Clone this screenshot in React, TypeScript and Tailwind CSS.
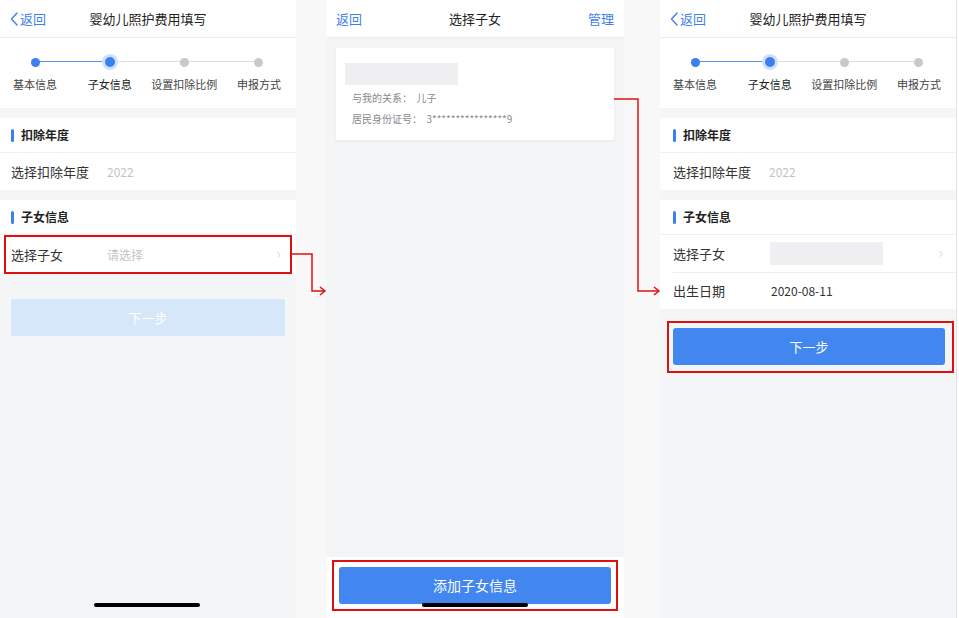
import { ChevronRight } from 'lucide-react';

const font = { fontFamily: '"Noto Sans CJK SC", "Noto Sans", sans-serif' };

const steps = ['基本信息', '子女信息', '设置扣除比例', '申报方式'];

const BackChevron = () => (
  <svg width="8" height="14" viewBox="0 0 8 14" className="mr-[2px]">
    <path d="M7 1 L1.5 7 L7 13" fill="none" stroke="currentColor" strokeWidth="1.4" strokeLinecap="round" strokeLinejoin="round" />
  </svg>
);

const Header = ({ title, back = true, right }: { title: string; back?: boolean; right?: string }) => (
  <div className="h-[38px] bg-white border-b border-[#ececee] flex items-center relative px-[10px]">
    <div className="flex items-center text-[13px] text-[#3f7fe9] z-10">
      {back && <BackChevron />}
      <span>返回</span>
    </div>
    <div className="absolute inset-0 flex items-center justify-center text-[13px] text-[#222]">{title}</div>
    {right && <div className="ml-auto text-[13px] text-[#3f7fe9] z-10">{right}</div>}
  </div>
);

const Steps = () => (
  <div className="bg-white h-[70px] pt-[18px] relative">
    <div className="absolute top-[23px] left-[35px] w-[75px] h-px bg-[#5a8fe8]" />
    <div className="absolute top-[23px] left-[110px] w-[148px] h-px bg-[#dedee0]" />
    <div className="flex justify-between w-[294px] relative">
      {steps.map((s, i) => (
        <div key={s} className="w-[70px] flex flex-col items-center">
          <div className="h-[12px] flex items-center justify-center">
            {i === 1 ? (
              <div className="w-[16px] h-[16px] rounded-full bg-[#cfe1fb] flex items-center justify-center">
                <div className="w-[10px] h-[10px] rounded-full bg-[#3b7ff0]" />
              </div>
            ) : (
              <div className={`w-[9px] h-[9px] rounded-full ${i === 0 ? 'bg-[#3b7ff0]' : 'bg-[#c9c9cc]'}`} />
            )}
          </div>
          <div className={`mt-[9px] text-[11px] leading-[14px] whitespace-nowrap ${i === 1 ? 'text-[#222]' : 'text-[#444]'}`}>{s}</div>
        </div>
      ))}
    </div>
  </div>
);

const SectionTitle = ({ text, pad }: { text: string; pad: string }) => (
  <div className={`h-[35px] flex items-center border-b border-[#f0f0f2] ${pad}`}>
    <div className="w-[3px] h-[13px] rounded-full bg-[#3b7ff0] mr-[7px]" />
    <span className="text-[12px] font-bold text-[#222]">{text}</span>
  </div>
);

const Row = ({ label, children, chevron, pad }: { label: string; children?: React.ReactNode; chevron?: boolean; pad: string }) => (
  <div className={`h-[37px] flex items-center pr-[10px] ${pad}`}>
    <span className="w-[96px] text-[13px] text-[#333]">{label}</span>
    <div className="flex-1 flex items-center text-[12px]">{children}</div>
    {chevron && <ChevronRight className="w-[10px] h-[10px] text-[#b5b5b8]" strokeWidth={1.5} />}
  </div>
);

const FormPanel = ({ done }: { done?: boolean }) => {
  const pad = done ? 'pl-[13px]' : 'pl-[11px]';
  return (
    <div className="w-[296px] h-[618px] bg-[#f4f5f7] flex flex-col relative">
      <Header title="婴幼儿照护费用填写" />
      <Steps />
      <div className="mt-[10px] bg-white">
        <SectionTitle text="扣除年度" pad={pad} />
        <Row label="选择扣除年度" pad={pad}>
          <span className="text-[#c4c4c7]">2022</span>
        </Row>
      </div>
      <div className="mt-[10px] bg-white">
        <SectionTitle text="子女信息" pad={pad} />
        {done ? (
          <>
            <Row label="选择子女" chevron pad={pad}>
              <div className="w-[113px] h-[23px] bg-[#efeff1] ml-[1px]" />
            </Row>
            <div className="ml-[13px] border-t border-[#eeeef0]">
              <div className="h-[36px] flex items-center">
                <span className="w-[98px] text-[13px] text-[#333]">出生日期</span>
                <span className="text-[12px] text-[#333]">2020-08-11</span>
              </div>
            </div>
          </>
        ) : (
          <div className="mx-[4px] border-2 border-[#e01010]">
            <div className="h-[35px] flex items-center pl-[5px] pr-[6px]">
              <span className="w-[96px] text-[13px] text-[#333]">选择子女</span>
              <span className="flex-1 text-[12px] text-[#c4c4c7]">请选择</span>
              <ChevronRight className="w-[10px] h-[10px] text-[#b5b5b8]" strokeWidth={1.5} />
            </div>
          </div>
        )}
      </div>
      {done ? (
        <div className="mt-[12px] ml-[7px] mr-[2px] border-2 border-[#e01010] pt-[5px] pb-[6px] pl-[4px] pr-[7px]">
          <div className="h-[37px] rounded-[3px] bg-[#4286f0] flex items-center justify-center text-[13px] text-white">下一步</div>
        </div>
      ) : (
        <div className="mt-[25px] mx-[11px] h-[37px] rounded-[2px] bg-[#d5e7f8] flex items-center justify-center text-[13px] text-white">下一步</div>
      )}
      {!done && <div className="absolute bottom-[11px] left-[94px] w-[106px] h-[4px] rounded-full bg-black" />}
    </div>
  );
};

const ChildPanel = () => (
  <div className="w-[298px] h-[618px] bg-[#f4f5f7] flex flex-col relative">
    <Header title="选择子女" back={false} right="管理" />
    <div className="mt-[10px] mx-[10px] bg-white shadow-[0_1px_3px_rgba(0,0,0,0.06)] h-[92px] pt-[15px] px-[9px]">
      <div className="w-[113px] h-[22px] bg-[#efeff1]" />
      <div className="mt-[5px] pl-[7px] text-[10px] leading-[16px] text-[#8a8a8d]">与我的关系：&nbsp;&nbsp;儿子</div>
      <div className="mt-[5px] pl-[7px] text-[10px] leading-[16px] text-[#8a8a8d]">居民身份证号：&nbsp;&nbsp;3****************9</div>
    </div>
    <div className="mt-auto bg-white h-[61px] px-[6px] pt-[3px]">
      <div className="border-2 border-[#e01010] h-[51px] p-[5px]">
        <div className="h-[37px] rounded-[3px] bg-[#4286f0] flex items-center justify-center text-[14px] text-white">添加子女信息</div>
      </div>
    </div>
    <div className="absolute bottom-[11px] left-[96px] w-[106px] h-[4px] rounded-full bg-black" />
  </div>
);

const Arrows = () => (
  <svg className="absolute inset-0 pointer-events-none" width="959" height="618" viewBox="0 0 959 618">
    <g fill="none" stroke="#e01010" strokeWidth="1.5">
      <path d="M292 254 H312 V291 H324" />
      <path d="M320 287 L325 291 L320 295" />
      <path d="M614 99 H638 V291 H658" />
      <path d="M654 287 L659 291 L654 295" />
    </g>
  </svg>
);

export default function App() {
  return (
    <div className="w-[959px] h-[618px] bg-[#f8f8f9] flex relative overflow-hidden" style={font}>
      <FormPanel />
      <div className="w-[30px]" />
      <ChildPanel />
      <div className="w-[36px]" />
      <div className="border-r border-[#e2e2e4]">
        <FormPanel done />
      </div>
      <div className="flex-1 bg-white" />
      <Arrows />
    </div>
  );
}
